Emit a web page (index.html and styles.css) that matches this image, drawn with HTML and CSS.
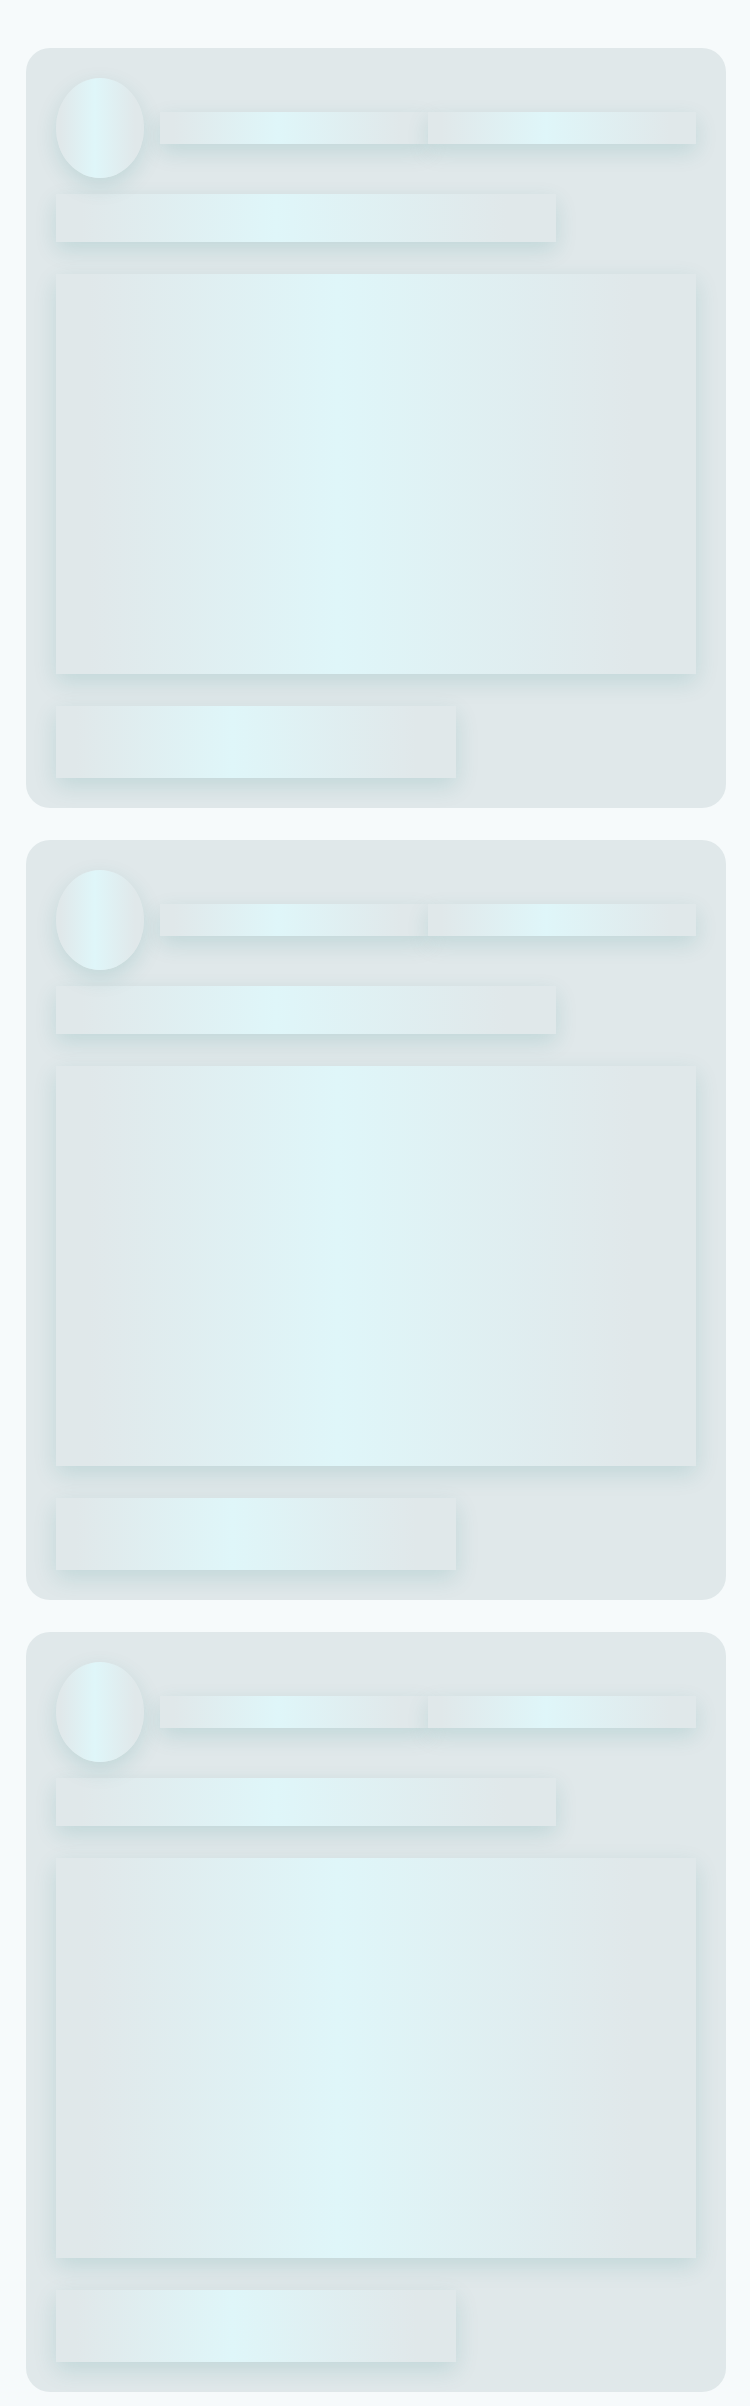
FILE: index.html
```html
<!DOCTYPE html>
<html lang="en">
<head>
    <meta charset="UTF-8">
    <meta name="viewport" content="width=device-width, initial-scale=1.0">
    <title>Loading</title>
    <link rel="stylesheet" href="styles.css">
</head>
<body>
    <div class="feed">
        <div class="card">
            <div class="card-head">
                <div class="avatar shimmer"></div>
                <div class="lines">
                    <div class="line shimmer"></div>
                    <div class="line shimmer"></div>
                </div>
            </div>
            <div class="title shimmer"></div>
            <div class="media shimmer"></div>
            <div class="actions shimmer"></div>
        </div>

        <div class="card">
            <div class="card-head">
                <div class="avatar shimmer"></div>
                <div class="lines">
                    <div class="line shimmer"></div>
                    <div class="line shimmer"></div>
                </div>
            </div>
            <div class="title shimmer"></div>
            <div class="media shimmer"></div>
            <div class="actions shimmer"></div>
        </div>

        <div class="card">
            <div class="card-head">
                <div class="avatar shimmer"></div>
                <div class="lines">
                    <div class="line shimmer"></div>
                    <div class="line shimmer"></div>
                </div>
            </div>
            <div class="title shimmer"></div>
            <div class="media shimmer"></div>
            <div class="actions shimmer"></div>
        </div>
    </div>
</body>
</html>
```

FILE: styles.css
```css
* {
    margin: 0;
    padding: 0;
    box-sizing: border-box;
}

body {
    font-family: "Liberation Sans", Arial, sans-serif;
    background-color: #f6fafb;
}

.feed {
    display: flex;
    flex-direction: column;
    gap: 32px;
    padding: 48px 24px 14px 26px;
}

.card {
    width: 700px;
    background: #e0e8ea;
    border-radius: 24px;
    padding: 30px;
}

.shimmer {
    background: linear-gradient(90deg, #e0e8ea 5%, #dff6f9 44%, #e0e8ea 90%);
    box-shadow: 0 8px 22px rgba(0, 110, 110, 0.14);
}

.card-head {
    display: flex;
    align-items: center;
    gap: 16px;
    height: 100px;
}

.avatar {
    width: 88px;
    height: 100px;
    border-radius: 50%;
    flex-shrink: 0;
}

.lines {
    flex: 1;
    display: flex;
    height: 32px;
}

.line {
    flex: 1;
}

.title {
    width: 500px;
    height: 48px;
    margin-top: 16px;
}

.media {
    height: 400px;
    margin-top: 32px;
}

.actions {
    width: 400px;
    height: 72px;
    margin-top: 32px;
}
```
